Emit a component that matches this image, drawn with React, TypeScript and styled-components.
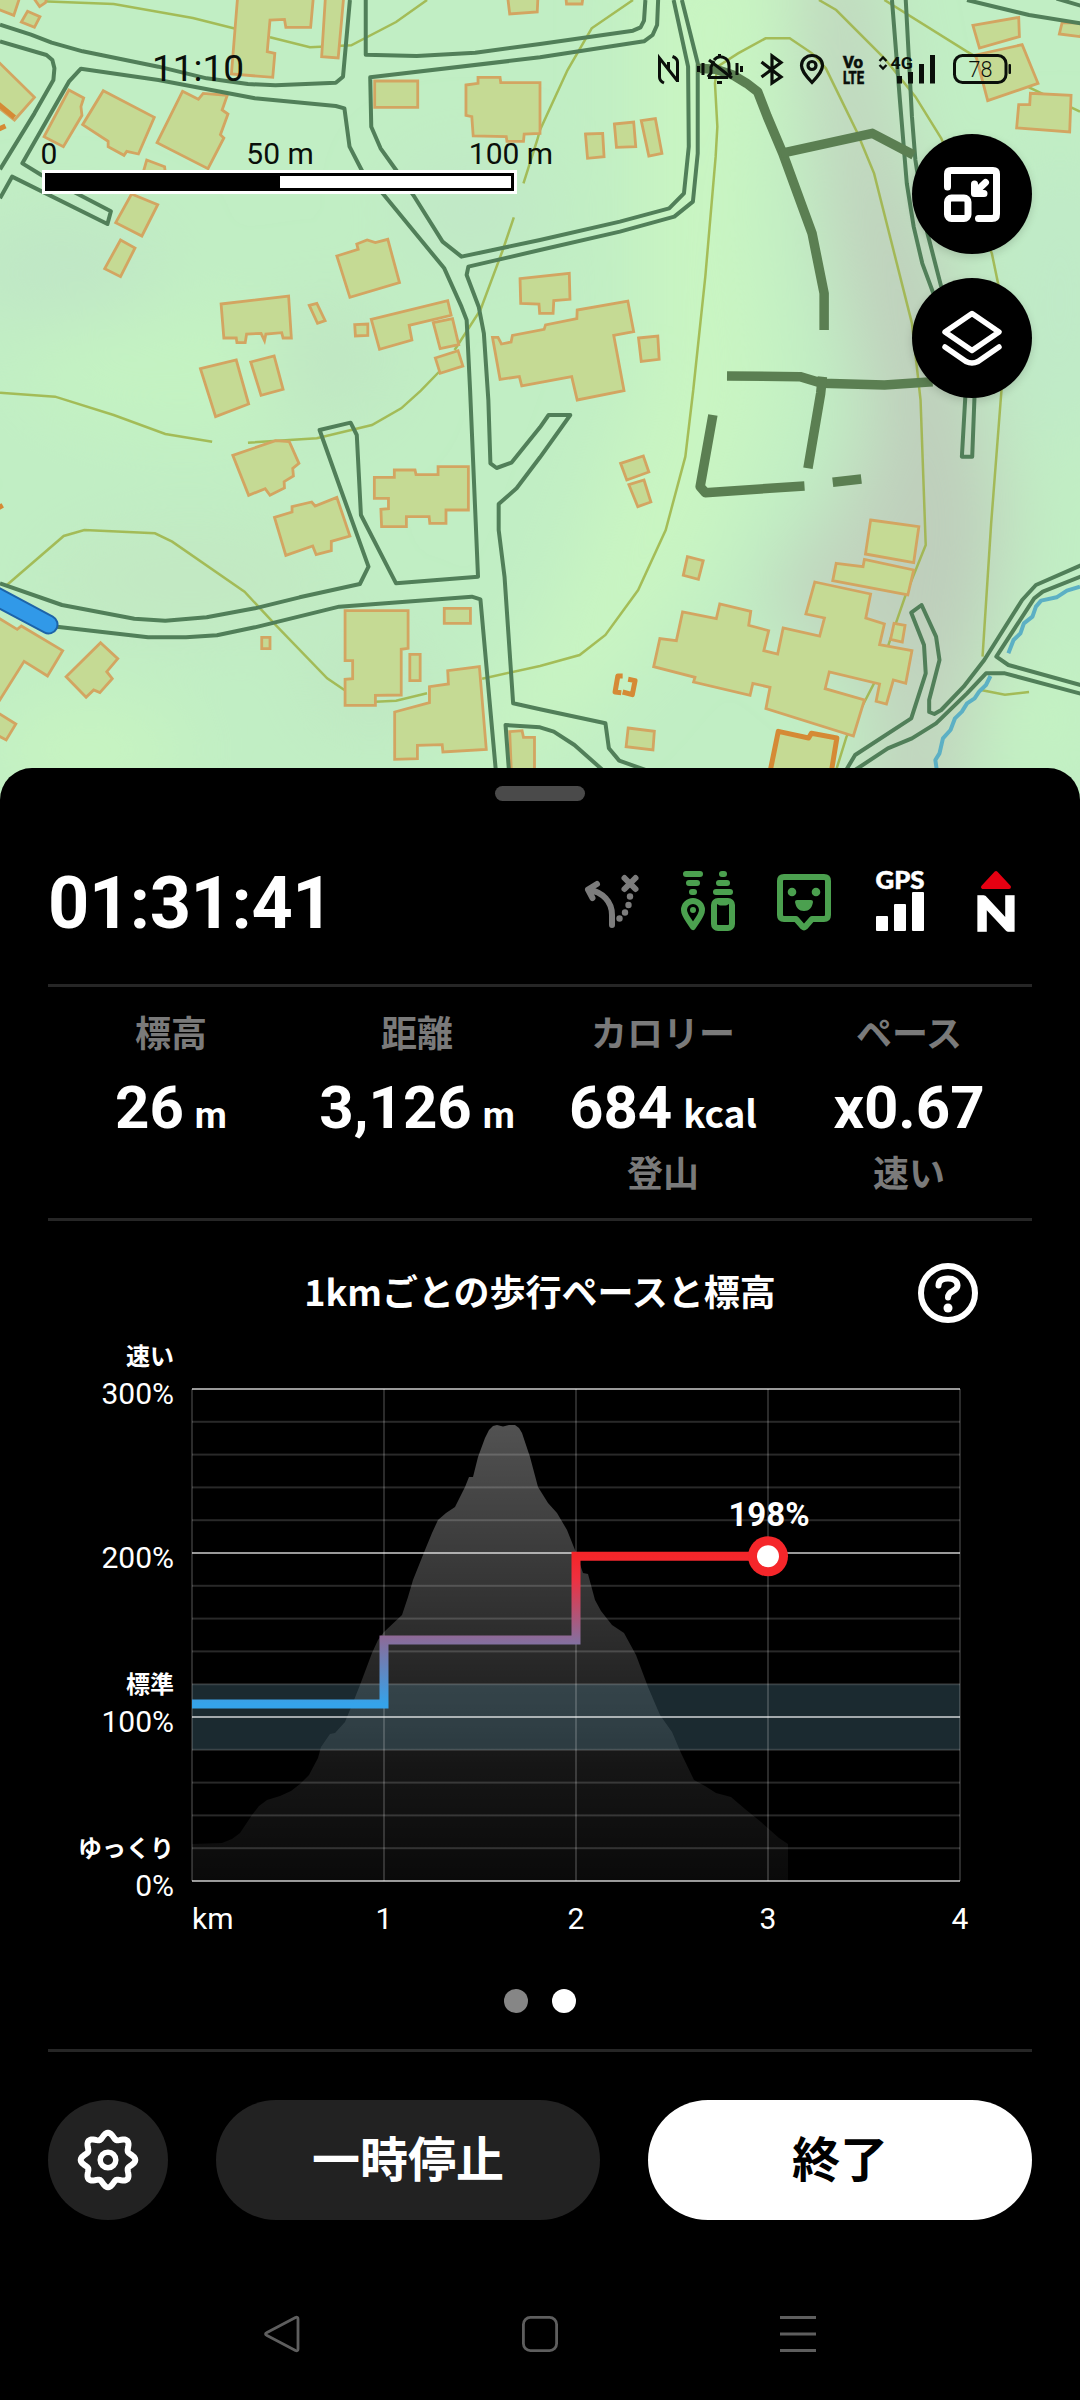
import React from 'react';
import styled, { createGlobalStyle } from 'styled-components';

const GlobalStyle = createGlobalStyle`
  body {
    margin: 0;
    background: #000;
    font-family: Roboto, 'Noto Sans CJK JP', sans-serif;
  }

  * {
    box-sizing: border-box;
  }
`;

const Screen = styled.div`
  display: flex;
  flex-direction: column;
  width: 1080px;
  height: 2400px;
  overflow: hidden;
  background: #000;
`;

/* ---------- map ---------- */

const MapArea = styled.div`
  position: relative;
  flex: none;
  height: 808px;
  background: #c1eec4;
`;

const MapSvg = styled.svg`
  display: block;
`;

const StatusBar = styled.div`
  position: absolute;
  top: 48px;
  left: 152px;
  right: 68px;
  display: flex;
  justify-content: space-between;
  align-items: center;
  height: 42px;
`;

const Clock = styled.span`
  color: #0a0f0a;
  font-size: 37px;
  line-height: 42px;
`;

const StatusIcons = styled.div`
  display: flex;
  height: 42px;
`;

const ScaleBar = styled.div`
  position: absolute;
  top: 136px;
  left: 42px;
  width: 475px;
`;

const ScaleLabels = styled.div`
  display: flex;
  justify-content: space-between;
  height: 34px;
  padding: 0 6px 0 7px;
  color: #0a0f0a;
  font-size: 30px;
  line-height: 36px;
`;

const ScaleLabel = styled.span`
  display: flex;
  justify-content: center;
  width: 0;
  white-space: nowrap;
`;

const ScaleTrack = styled.div`
  height: 24px;
  border: 3px solid #fff;
  background: #000;
  padding: 3px 3px 3px 235px;
`;

const ScaleHalf = styled.div`
  height: 12px;
  background: #fff;
`;

const MapButtons = styled.div`
  position: absolute;
  top: 134px;
  right: 48px;
  display: flex;
  flex-direction: column;
  gap: 24px;
`;

const MapButton = styled.button`
  display: flex;
  align-items: center;
  justify-content: center;
  width: 120px;
  height: 120px;
  padding: 0;
  border: none;
  border-radius: 50%;
  background: #000;
  box-shadow: 0 3px 9px rgba(0, 0, 0, 0.15);
`;

/* ---------- sheet ---------- */

const Sheet = styled.main`
  position: relative;
  display: flex;
  flex-direction: column;
  flex: 1;
  margin-top: -40px;
  padding: 18px 48px 0;
  border-radius: 32px 32px 0 0;
  background: #000;
  color: #fff;
`;

const Handle = styled.div`
  align-self: center;
  width: 90px;
  height: 15px;
  border-radius: 8px;
  background: #4a4a4a;
`;

const Divider = styled.hr`
  width: 100%;
  height: 3px;
  margin: 0;
  border: none;
  background: #262626;
`;

const SummaryRow = styled.div`
  display: flex;
  justify-content: space-between;
  align-items: center;
  height: 72px;
  margin: 64px 0 47px;
`;

const Elapsed = styled.div`
  padding-top: 6px;
  font-size: 72px;
  font-weight: 700;
  letter-spacing: -0.4px;
  line-height: 72px;
`;

const Indicators = styled.div`
  display: flex;
  gap: 24px;
`;

const Indicator = styled.svg`
  width: 72px;
  height: 72px;
  overflow: visible;
`;

const Stats = styled.div`
  display: grid;
  grid-template-columns: repeat(4, 1fr);
  height: 231px;
  padding-top: 18px;
`;

const Stat = styled.div`
  display: flex;
  flex-direction: column;
  align-items: center;
`;

const StatLabel = styled.div`
  color: #7a7a7a;
  font-family: 'Noto Sans CJK JP', sans-serif;
  font-size: 36px;
  font-weight: 700;
  line-height: 52px;
`;

const StatValue = styled.div`
  height: 88px;
  padding-top: 7px;
  font-size: 60px;
  font-weight: 700;
  line-height: 88px;
  white-space: pre;
  word-spacing: -4px;
`;

const Unit = styled.span<{ $cjk?: boolean }>`
  font-family: ${({ $cjk }) => ($cjk ? "'Noto Sans CJK JP'" : 'Roboto')}, sans-serif;
  font-size: 37px;
  line-height: 1;
`;

const ChartHeader = styled.div`
  display: grid;
  grid-template-columns: 60px 1fr 60px;
  align-items: center;
  height: 60px;
  margin: 42px 54px 0;
`;

const ChartTitle = styled.h2`
  grid-column: 2;
  margin: 0;
  padding-bottom: 7px;
  font-family: 'Noto Sans CJK JP', sans-serif;
  font-size: 36px;
  font-weight: 700;
  line-height: 52px;
  text-align: center;
`;

const ChartSvg = styled.svg`
  display: block;
  flex: none;
`;

const AxisText = styled.text<{ $bold?: boolean }>`
  fill: #fff;
  font-family: Roboto, sans-serif;
  font-size: ${({ $bold }) => ($bold ? 33 : 30)}px;
  font-weight: ${({ $bold }) => ($bold ? 700 : 400)};
`;

const AxisNote = styled.text`
  fill: #fff;
  font-family: 'Noto Sans CJK JP', sans-serif;
  font-size: 24px;
  font-weight: 700;
`;

const Pager = styled.div`
  display: flex;
  justify-content: center;
  gap: 24px;
  margin: 39px 0 36px;
`;

const PagerDot = styled.span<{ $active?: boolean }>`
  width: 24px;
  height: 24px;
  border-radius: 50%;
  background: ${({ $active }) => ($active ? '#fff' : '#868686')};
`;

const Actions = styled.div`
  display: grid;
  grid-template-columns: 120px 1fr 1fr;
  gap: 48px;
  height: 120px;
  margin-top: 48px;
`;

const RoundButton = styled.button`
  display: flex;
  align-items: center;
  justify-content: center;
  padding: 0;
  border: none;
  border-radius: 50%;
  background: #222;
`;

const ActionButton = styled.button<{ $primary?: boolean }>`
  display: flex;
  align-items: center;
  justify-content: center;
  padding: 0 0 9px;
  border: none;
  border-radius: 60px;
  background: ${({ $primary }) => ($primary ? '#fff' : '#222')};
  color: ${({ $primary }) => ($primary ? '#000' : '#fff')};
  font-family: 'Noto Sans CJK JP', sans-serif;
  font-size: 48px;
  font-weight: 700;
  line-height: 70px;
`;

const NavBar = styled.nav`
  display: flex;
  justify-content: space-between;
  margin: 93px 214px 0;
`;

/* ---------- map data: tiles of 1568 x 1200 units, second row starts at 1170 ---------- */

interface Tile {
  x: number;
  y: number;
  contours: string[];
  buildings: string[];
  roads: string[];
  walls?: string[];
  rivers?: string[];
  bold?: string[];
}

const TILES: Tile[] = [
  {
    x: 0,
    y: 0,
    contours: [
      '120,4 330,12 560,54 684,86',
      '784,112 900,142 1020,136 1150,66 1240,0',
      '1492,652 1460,750 1395,930 1320,1050',
      '1838,0 1718,85 1648,210 1568,390 1560,420 1520,550',
      '1280,1110 1222,1172 1165,1225 1080,1275 920,1315 720,1328',
      '0,1178 160,1190 330,1245 480,1302 616,1325',
    ],
    buildings: [
      '690,-10 910,-10 902,82 830,82 826,58 784,60 776,155 798,160 792,232 672,222',
      '945,-10 998,-10 982,174 934,170',
      '1474,-10 1562,-10 1560,36 1480,42',
      '1088,243 1213,243 1213,322 1088,322',
      '1353,255 1388,250 1388,232 1452,232 1454,248 1568,248 1568,400 1522,402 1520,424 1472,424 1470,410 1374,408 1370,350 1353,346',
      '-10,-10 58,-10 40,46 -10,26',
      '95,-10 137,-10 132,8 115,20',
      '80,34 116,50 100,82 62,66',
      '-10,180 100,292 42,360 -10,318',
      '200,270 243,294 235,320 238,346 184,440 128,410',
      '300,272 448,352 402,462 368,454 360,466 314,440 314,424 240,374',
      '530,274 576,298 590,280 660,286 645,330 662,342 640,404 650,414 604,506 456,428',
      '426,480 478,500 480,520 415,520',
      '382,582 458,614 412,708 336,668',
      '350,720 392,744 350,830 304,806',
      '978,768 1040,748 1036,732 1066,720 1090,728 1126,718 1160,848 1016,892',
      '642,912 838,888 846,1014 822,1014 818,998 772,1002 768,1022 758,1000 716,1002 712,1028 688,1028 686,1014 650,1014',
      '898,916 920,910 944,962 922,970',
      '1078,958 1300,902 1310,946 1188,976 1196,1020 1102,1048',
      '1030,974 1068,972 1068,1006 1032,1008',
      '1258,968 1314,956 1332,1034 1278,1046',
      '1264,1074 1330,1052 1344,1098 1278,1120',
      '582,1106 686,1080 722,1212 626,1250',
      '728,1086 796,1068 822,1168 758,1186',
      '1430,1012 1446,1012 1456,1032 1484,1026 1488,1006 1580,988 1584,975 1675,956 1676,930 1823,903 1840,995 1782,1006 1812,1172 1676,1200 1660,1130 1515,1158 1508,1130 1452,1138',
      '1510,836 1653,820 1655,898 1608,902 1606,940 1567,940 1565,912 1512,910',
    ],
    roads: [
      '0,74 90,104 150,128 240,154 460,200 600,235 720,252 800,256 975,248 996,230 1016,0',
      '0,124 135,165 152,180 158,205 155,240 100,340 0,508',
      '0,595 35,530 312,672 322,634 120,525 65,490 120,390 200,245 235,206 460,240 740,295 975,318 1000,325 1015,440 1050,510 1115,585 1290,805 1340,920 1355,960 1365,1170 1388,1730 1150,1750 1048,1545 1036,1305 1018,1268 928,1290 990,1470 1070,1700 1045,1752 870,1792 740,1825 600,1852 480,1862 390,1856 180,1815 0,1750',
      '1062,0 1062,164 1210,168 1380,158 1568,132 1838,92 1860,82 1870,62 1874,0',
      '1956,0 1998,200 2000,440 1986,580 1943,625 1800,665 1568,720 1340,770 1285,725 1200,585 1150,510 1105,445 1078,380 1075,232 1568,172 1870,124 1895,105 1908,75 1911,0',
      '1980,0 2026,190 2026,460 2012,605 1958,650 1800,695 1568,750 1360,800 1355,825 1390,920 1405,1000 1418,1200 1424,1390 1442,1404 1485,1388 1568,1282 1593,1245 1656,1245 1568,1372 1500,1465 1448,1512 1448,1590 1465,1730 1490,2110 1568,2128 1758,2170 1768,2245 1798,2282 1880,2312',
    ],
    bold: ['-10,308 42,352', '-10,390 16,378'],
  },
  {
    x: 1568,
    y: 0,
    contours: [
      '810,0 860,30 1000,175 1090,290 1165,415 1312,760 1340,900 1340,1170 1310,1570 1285,1970',
      '1000,0 1240,155 1420,262 1568,335',
      '445,1170 480,830 510,470 515,380 508,250 515,200 575,160 655,115 725,115 790,160 830,205 920,395 970,520 1080,970 1105,1200 1120,1635 1060,1790 1010,1940 970,2050 890,2210 860,2310',
    ],
    buildings: [
      '75,-10 125,-10 122,12 77,12',
      '132,402 182,400 186,470 138,475',
      '216,372 272,366 278,440 222,442',
      '294,362 335,356 354,460 316,468',
      '286,1014 342,1008 346,1078 294,1084',
      '1257,76 1390,52 1392,110 1276,144',
      '1516,68 1580,70 1570,110 1508,102',
      '1265,165 1400,134 1446,250 1300,302',
      '1390,314 1422,314 1424,280 1542,286 1538,396 1384,384',
    ],
    roads: [
      '1022,0 1045,300 1065,550 1085,680 1110,790 1160,930 1220,1050 1235,1190 1225,1370 1255,1370 1262,1180',
      '1062,0 1080,350 1090,480 1105,580 1125,700 1165,860',
      '1240,0 1420,45 1580,72',
      '1500,-4 1580,20',
    ],
    walls: [
      '455,205 510,208 560,225 600,250 632,275 660,350 705,460 790,700 825,880 825,990',
      '700,460 965,400 1085,465',
      '543,1128 755,1130 820,1150 1000,1155 1140,1145',
      '820,1130 815,1180 778,1405',
    ],
  },
  {
    x: 0,
    y: 1170,
    contours: ['1000,900 950,865 800,705 710,605 500,455 450,430 245,420 185,438 20,585', '1090,935 1150,932 1240,910'],
    buildings: [
      '676,196 800,152 840,155 868,220 850,235 852,258 825,275 826,294 784,316 770,296 722,316',
      '797,382 848,366 848,350 905,336 915,348 978,322 1016,438 962,454 962,482 918,494 908,468 830,496',
      '1087,262 1145,262 1145,240 1205,240 1208,254 1272,254 1272,230 1360,230 1360,360 1295,360 1295,400 1248,400 1246,380 1180,380 1180,410 1108,410 1106,358 1128,356 1128,325 1087,325',
      '1002,662 1185,662 1185,775 1165,778 1165,915 1090,916 1090,946 1002,946 1002,868 1024,866 1024,812 1002,812',
      '1190,793 1220,793 1220,872 1190,872',
      '1290,655 1366,655 1366,700 1290,700',
      '1146,966 1247,938 1247,890 1302,882 1300,842 1392,830 1412,1078 1286,1086 1284,1064 1212,1066 1212,1106 1146,1108',
      '760,742 784,742 784,776 760,776',
      '292,758 342,806 310,845 326,866 290,908 272,900 250,922 192,860',
      '-10,680 50,718 62,708 182,782 138,858 70,814 -10,945',
      '-10,966 46,1002 18,1050 -10,1034',
      '1480,1025 1516,1022 1520,1042 1552,1042 1552,1150 1485,1150',
    ],
    roads: [
      '165,710 430,742 540,742 630,736 740,712 985,650 1370,620 1395,628 1440,1145',
      '1478,1145 1468,1005 1568,1012 1608,1025 1668,1065 1750,1140',
    ],
    bold: ['-10,356 8,346'],
  },
  {
    x: 1568,
    y: 1170,
    contours: ['445,0 422,200 365,420 285,600 190,735 115,795 0,828 -168,866', '1280,900 1350,914 1420,906'],
    buildings: [
      '234,220 300,198 316,246 252,270',
      '258,284 302,270 322,336 284,350',
      '428,500 474,512 460,568 416,556',
      '960,390 1100,410 1085,518 945,492',
      '860,520 938,530 942,508 1085,540 1068,615 850,572',
      '798,576 960,612 946,684 1000,702 986,764 1080,782 1062,880 1026,870 1006,942 976,934 986,882 840,846 828,896 942,930 910,1038 656,956 668,892 618,880 610,916 446,876 450,862 330,830 348,746 396,752 414,666 512,686 522,642 612,664 606,706 664,722 650,782 690,792 706,714 812,738 826,684 772,672',
      '1028,700 1060,706 1052,756 1018,748',
      '256,1014 332,1024 328,1080 250,1070',
      '668,1145 692,1024 780,1044 788,1030 862,1044 846,1145',
    ],
    rivers: [
      '1568,590 1530,602 1500,622 1455,632 1440,650 1430,680 1405,700 1395,730 1375,750 1360,790',
      '1308,858 1295,885 1275,905 1262,925 1240,940 1225,965 1205,985 1192,1020 1170,1045 1160,1090 1148,1110 1152,1140',
    ],
    roads: [
      '1580,522 1440,585 1400,630 1290,810 1230,890 1165,960 1145,972 1130,966 1130,930 1160,810 1150,740 1108,645 1078,668 1115,765 1120,850 1078,985 915,1095 886,1145',
      '1580,556 1460,605 1435,625 1325,800 1360,825 1580,888',
      '1580,914 1350,850 1295,850 1240,910 1150,1000 1080,1045 1010,1075 915,1140',
    ],
    walls: ['502,75 465,290 480,308 768,288', '850,277 933,267'],
    bold: ['668,1145 692,1024 780,1044 788,1030 862,1044 846,1145', '240,858 226,858 218,906 236,908', '256,868 276,872 268,914 240,906'],
  },
];

const Contour = styled.polyline`
  fill: none;
  stroke: #9db344;
  stroke-width: 2.5;
  stroke-opacity: 0.85;
  vector-effect: non-scaling-stroke;
`;

const Building = styled.polygon`
  fill: #c5da94;
  stroke: #d3a561;
  stroke-width: 2.8;
  vector-effect: non-scaling-stroke;
`;

const Line = styled.polyline<{ $color: string; $width: number }>`
  fill: none;
  stroke: ${({ $color }) => $color};
  stroke-width: ${({ $width }) => $width};
  stroke-linejoin: round;
  vector-effect: non-scaling-stroke;
`;

const TopoMap: React.FC = () => (
  <MapSvg width="1080" height="808" viewBox="0 0 1080 808">
    <defs>
      <filter id="relief" x="-50%" y="-50%" width="200%" height="200%">
        <feGaussianBlur stdDeviation="36" />
      </filter>
    </defs>
    <g filter="url(#relief)">
      <path d="M640 -60L790 -60L760 200L780 400L720 560L600 700L440 808L560 600L640 380Z" fill="#c9f5c2" />
      <path d="M800 -60L860 -60L900 150L960 300L1010 520L950 860L850 860L880 700L760 600L840 500L870 420L830 240Z" fill="#c1d3be" />
      <path d="M890 180L920 180L950 420L970 640L910 640L910 400Z" fill="#bccbba" />
      <ellipse cx="180" cy="370" rx="160" ry="60" fill="#c4f3c2" />
      <ellipse cx="60" cy="270" rx="100" ry="50" fill="#c0e6c6" />
      <ellipse cx="190" cy="580" rx="150" ry="50" fill="#c2e8c3" />
      <ellipse cx="90" cy="750" rx="100" ry="50" fill="#c7f4c1" />
      <ellipse cx="330" cy="360" rx="60" ry="60" fill="#c0e6c3" />
      <ellipse cx="470" cy="210" rx="70" ry="50" fill="#c1e7c7" />
      <ellipse cx="1060" cy="300" rx="60" ry="150" fill="#c0eac8" />
      <ellipse cx="1040" cy="720" rx="60" ry="60" fill="#c4f2c3" />
      <ellipse cx="370" cy="680" rx="60" ry="50" fill="#c0e6c2" />
    </g>
    <g transform="scale(0.34439 0.33333)">
      {TILES.map((tile) => (
        <g key={`${tile.x}-${tile.y}`} transform={`translate(${tile.x} ${tile.y})`}>
          {tile.contours.map((p) => <Contour key={p} points={p} />)}
          {tile.rivers?.map((p) => <Line key={p} points={p} $color="#5cb0c4" $width={4} />)}
          {tile.buildings.map((p) => <Building key={p} points={p} />)}
          {tile.bold?.map((p) => <Line key={p} points={p} $color="#d58a35" $width={5} />)}
        </g>
      ))}
      {TILES.map((tile) => (
        <g key={`${tile.x}-${tile.y}`} transform={`translate(${tile.x} ${tile.y})`}>
          {tile.roads.map((p) => <Line key={p} points={p} $color="#517f59" $width={4} />)}
          {tile.walls?.map((p) => <Line key={p} points={p} $color="#5b7f52" $width={9.5} />)}
        </g>
      ))}
    </g>
    <g fill="none" strokeLinecap="round">
      <path d="M-20 588L48.500 624.500" stroke="#1d63a8" strokeWidth="20" />
      <path d="M-20 588L48.500 624.500" stroke="#3199e8" strokeWidth="16" />
    </g>
  </MapSvg>
);

/* viewBoxes below share the page's own pixel grid */
const StatusGlyphs: React.FC = () => (
  <StatusIcons>
    <svg width="36" height="42" viewBox="652 48 36 42" fill="none" stroke="#0a0f0a" strokeWidth="3">
      <path d="M664 83Q659.500 81 659.500 77V58L677.500 81" />
      <path d="M672.500 56.500Q677.500 58.500 677.500 62V82M668.500 62V69" />
    </svg>
    <svg width="64" height="42" viewBox="688 48 64 42" fill="none" stroke="#0a0f0a" strokeWidth="3">
      <path d="M698.500 66V72M703 63V75M737 63V75M741.500 66V72" />
      <path d="M708 77.500H728M708 77L711 73V67L714 61M714 60C719 54 729 57 729 66V71L731 75M719.500 54V57" />
      <path d="M709 60L732 78" />
      <path d="M717 82.500H722" />
    </svg>
    <svg width="40" height="42" viewBox="752 48 40 42" fill="none" stroke="#0a0f0a" strokeWidth="3.200">
      <path d="M761.500 62L781 77L772 83V56L781 62.500L761.500 77" />
    </svg>
    <svg width="46" height="42" viewBox="792 48 46 42" fill="none" stroke="#0a0f0a" strokeWidth="3.200">
      <path d="M812 82.500C804 74 801.500 70 801.500 65.500A10.500 10 0 0 1 822.500 65.500C822.500 70 820 74 812 82.500Z" />
      <circle cx="812" cy="65.500" r="4" />
    </svg>
    <svg width="36" height="42" viewBox="838 48 36 42" fill="#0a0f0a" stroke="#0a0f0a" strokeWidth="0.700" fontFamily="Roboto, sans-serif" fontWeight="700">
      <text x="843" y="68" fontSize="17" textLength="20" lengthAdjust="spacingAndGlyphs">Vo</text>
      <text x="843" y="84" fontSize="18.500" textLength="21" lengthAdjust="spacingAndGlyphs">LTE</text>
    </svg>
    <svg width="72" height="42" viewBox="874 48 72 42" fill="#0a0f0a">
      <path d="M879.500 61L883 57.500L886.500 61M879.500 65L883 68.500L886.500 65" fill="none" stroke="#0a0f0a" strokeWidth="2.400" />
      <text x="890.500" y="68.500" fontSize="17" fontFamily="Roboto, sans-serif" fontWeight="700" textLength="22.500" lengthAdjust="spacingAndGlyphs">4G</text>
      <rect x="897" y="76" width="5" height="7.500" />
      <rect x="908" y="72" width="5" height="11.500" />
      <rect x="919" y="64" width="5" height="19.500" />
      <rect x="930" y="55" width="5" height="28.500" />
    </svg>
    <svg width="66" height="42" viewBox="946 48 66 42">
      <rect x="954.500" y="55.500" width="51.500" height="27" rx="8" fill="none" stroke="#0a0f0a" strokeWidth="3" />
      <rect x="1008.500" y="64" width="2.500" height="10" rx="1" fill="#0a0f0a" />
      <text x="980.500" y="76.500" fontSize="21.500" fontFamily="Roboto, sans-serif" fontWeight="300" textAnchor="middle" fill="#0a0f0a">78</text>
    </svg>
  </StatusIcons>
);

/* ---------- chart ---------- */

const LEFT = 192;
const KM = 192;
const BASE = 1881;
const HUNDRED = 164;

const PROFILE =
  '192,1881 192,1844 222,1843 232,1839 240,1833 252,1815 259,1806 267,1800 280,1796 291,1791 300,1784 309,1775 318,1758 321,1747 330,1734 335,1733 345,1722 354,1700 360,1685 372,1653 378,1640 384,1632 402,1615 408,1597 413,1580 425,1550 432,1533 438,1520 446,1513 455,1507 465,1487 469,1477 473,1477 478,1457 485,1438 489,1430 493,1426 497,1425 503,1426.500 509,1425 515,1425 519,1428 522,1433 530,1457 538,1487 548,1503 557,1513 567,1530 575,1550 583,1573 588,1574 595,1600 601,1611 612,1625 624,1633 636,1655 648,1687 660,1715 672,1732 681,1753 694,1780 705,1786 716,1793 731,1797 745,1809 761,1822 779,1838 788,1844 788,1881';

const PERCENTS = [300, 200, 100, 0];
const NOTES: Record<number, string> = { 300: '速い', 100: '標準', 0: 'ゆっくり' };

const yOf = (percent: number) => BASE - (percent / 100) * HUNDRED;

const PaceChart: React.FC = () => (
  <ChartSvg width="984" height="627" viewBox="48 1323 984 627">
    <defs>
      <linearGradient id="mountain" x1="0" y1="1425" x2="0" y2="1881" gradientUnits="userSpaceOnUse">
        <stop offset="0" stopColor="#fff" stopOpacity="0.32" />
        <stop offset="0.75" stopColor="#fff" stopOpacity="0.085" />
        <stop offset="1" stopColor="#fff" stopOpacity="0.04" />
      </linearGradient>
      <linearGradient id="pace" x1="0" y1={yOf(108)} x2="0" y2={yOf(198)} gradientUnits="userSpaceOnUse">
        <stop offset="0" stopColor="#35a3ea" />
        <stop offset="0.44" stopColor="#8a6c9a" />
        <stop offset="0.85" stopColor="#ef3040" />
        <stop offset="1" stopColor="#f5262a" />
      </linearGradient>
    </defs>
    <polygon points={PROFILE} fill="url(#mountain)" />
    <rect x={LEFT} y={yOf(120)} width={KM * 4} height={yOf(80) - yOf(120)} fill="#649bb2" fillOpacity="0.27" />
    {Array.from({ length: 16 }, (_, i) => i * 20).map((p) => (
      <rect key={p} x={LEFT} y={yOf(p) - 1} width={KM * 4} height="2" fill="#fff" fillOpacity={p % 100 ? 0.16 : 0.6} />
    ))}
    {[0, 1, 2, 3, 4].map((k) => (
      <rect key={k} x={LEFT + KM * k - 1} y={yOf(300)} width="2" height={HUNDRED * 3} fill="#fff" fillOpacity="0.17" />
    ))}
    <path
      d={`M${LEFT} ${yOf(108)}H384V${yOf(147)}H576V${yOf(198)}H768`}
      fill="none"
      stroke="url(#pace)"
      strokeWidth="9"
    />
    <circle cx="768" cy={yOf(198)} r="20" fill="#f5262a" />
    <circle cx="768" cy={yOf(198)} r="11" fill="#fff" />
    <AxisText $bold x="769" y="1525.500" textAnchor="middle">198%</AxisText>
    {PERCENTS.map((p) => (
      <g key={p} textAnchor="end">
        {NOTES[p] && <AxisNote x="174" y={yOf(p) - 24}>{NOTES[p]}</AxisNote>}
        <AxisText x="174" y={yOf(p) + 15}>{p}%</AxisText>
      </g>
    ))}
    <AxisText x="192" y="1929">km</AxisText>
    {[1, 2, 3, 4].map((k) => (
      <AxisText key={k} x={LEFT + KM * k} y="1929" textAnchor="middle">{k}</AxisText>
    ))}
  </ChartSvg>
);

const gearPath = () => {
  const points: string[] = [];
  for (let a = 0; a < 360; a += 3) {
    const t = (a * Math.PI) / 180;
    const r = 24.4 + 2.9 * Math.cos(8 * t);
    points.push(`${(32 + r * Math.sin(t)).toFixed(2)},${(32 - r * Math.cos(t)).toFixed(2)}`);
  }
  return points.join(' ');
};

const App: React.FC = () => (
  <Screen>
    <GlobalStyle />
    <MapArea>
      <TopoMap />
      <StatusBar>
        <Clock>11:10</Clock>
        <StatusGlyphs />
      </StatusBar>
      <ScaleBar>
        <ScaleLabels>
          <ScaleLabel>0</ScaleLabel>
          <ScaleLabel>50 m</ScaleLabel>
          <ScaleLabel>100 m</ScaleLabel>
        </ScaleLabels>
        <ScaleTrack>
          <ScaleHalf />
        </ScaleTrack>
      </ScaleBar>
      <MapButtons>
        <MapButton>
          <svg width="60" height="60" viewBox="0 0 60 60" fill="none" stroke="#fff" strokeWidth="7" strokeLinecap="round" strokeLinejoin="round">
            <path d="M5.500 23V10Q5.500 6.500 9 6.500H51Q54.500 6.500 54.500 10V50Q54.500 54.500 50 54.500H36.500" />
            <rect x="5.500" y="34" width="20.500" height="20.500" rx="4" />
            <path d="M43.500 18.500L34 27.500M32.500 20V29.500H42" />
          </svg>
        </MapButton>
        <MapButton>
          <svg width="60" height="60" viewBox="0 0 60 60" fill="none" stroke="#fff" strokeWidth="5.500" strokeLinecap="round" strokeLinejoin="round">
            <path d="M30 5.500L57 24L30 42.500L3 24Z" />
            <path d="M3 39L24 53.500Q30 56.500 36 53.500L57 39" />
          </svg>
        </MapButton>
      </MapButtons>
    </MapArea>

    <Sheet>
      <Handle />
      <SummaryRow>
        <Elapsed>01:31:41</Elapsed>
        <Indicators>
          <Indicator viewBox="0 0 72 72" fill="none" stroke="#7c7c7c" strokeWidth="6" strokeLinecap="round" strokeLinejoin="round">
            <path d="M36 60V50C36 37 27 27 12 24.500M21 19L12 24.500L16.500 33" />
            <path d="M48.500 13L59.500 24M59.500 13L48.500 24" />
            <g fill="#7c7c7c" stroke="none">
              <circle cx="54" cy="31.500" r="3.200" />
              <circle cx="52.500" cy="40" r="3.200" />
              <circle cx="49" cy="47.500" r="3.200" />
              <circle cx="43.500" cy="53.500" r="3.200" />
            </g>
          </Indicator>
          <Indicator viewBox="0 0 72 72" fill="none" stroke="#4ba04f" strokeWidth="6" strokeLinecap="round" strokeLinejoin="round">
            <path d="M14 9H28M17 18H25M20 27H22M50 9H52M47 18H55M44 27H58" />
            <path d="M21 62C16 54 12 50 12 45A9 9 0 0 1 30 45C30 50 26 54 21 62Z" />
            <circle cx="21" cy="45" r="3" fill="#4ba04f" stroke="none" />
            <rect x="42" y="36" width="18" height="27" rx="4" />
            <path d="M48.500 37.500H53.500" />
          </Indicator>
          <Indicator viewBox="0 0 72 72" fill="none" stroke="#4ba04f" strokeWidth="6" strokeLinejoin="round">
            <path d="M16 12H56Q60 12 60 16V50Q60 54 56 54H44L37 62Q36 63 35 62L28 54H16Q12 54 12 50V16Q12 12 16 12Z" />
            <g fill="#4ba04f" stroke="none">
              <circle cx="24" cy="27" r="4.300" />
              <circle cx="48" cy="27" r="4.300" />
              <path d="M29 35H43Q45 35 45 37C44 43 41 46 36 46S28 43 27 37Q27 35 29 35Z" />
            </g>
          </Indicator>
          <Indicator viewBox="0 0 72 72" fill="#fff">
            <text x="11.500" y="23.500" fontFamily="Lato, sans-serif" fontWeight="900" fontSize="24" stroke="#fff" strokeWidth="0.500" textLength="49" lengthAdjust="spacingAndGlyphs">GPS</text>
            <rect x="12" y="51" width="12" height="15" rx="1" />
            <rect x="30" y="39" width="12" height="27" rx="1" />
            <rect x="48" y="27" width="12" height="39" rx="1" />
          </Indicator>
          <Indicator viewBox="0 0 72 72">
            <path d="M36 8L23 22H49Z" fill="#e60012" stroke="#e60012" strokeWidth="4" strokeLinejoin="round" />
            <text x="14" y="65.500" fontFamily="Lato, sans-serif" fontWeight="900" fontSize="48" stroke="#fff" strokeWidth="1.500" textLength="44" lengthAdjust="spacingAndGlyphs" fill="#fff">N</text>
          </Indicator>
        </Indicators>
      </SummaryRow>
      <Divider />
      <Stats>
        <Stat>
          <StatLabel>標高</StatLabel>
          <StatValue>26 <Unit>m</Unit></StatValue>
        </Stat>
        <Stat>
          <StatLabel>距離</StatLabel>
          <StatValue>3,126 <Unit>m</Unit></StatValue>
        </Stat>
        <Stat>
          <StatLabel>カロリー</StatLabel>
          <StatValue>684 <Unit $cjk>kcal</Unit></StatValue>
          <StatLabel>登山</StatLabel>
        </Stat>
        <Stat>
          <StatLabel>ペース</StatLabel>
          <StatValue>x0.67</StatValue>
          <StatLabel>速い</StatLabel>
        </Stat>
      </Stats>
      <Divider />
      <ChartHeader>
        <ChartTitle>1kmごとの歩行ペースと標高</ChartTitle>
        <svg width="60" height="60" viewBox="0 0 60 60" fill="none" stroke="#fff" strokeWidth="6" strokeLinecap="round" strokeLinejoin="round">
          <circle cx="30" cy="30" r="27" />
          <path d="M20.500 22.500C20.500 17.500 24 15.500 30 15.500C36 15.500 39.500 18 39.500 22.500C39.500 29 30 27 30 34.500" />
          <circle cx="30" cy="45" r="4.500" fill="#fff" stroke="none" />
        </svg>
      </ChartHeader>
      <PaceChart />
      <Pager>
        <PagerDot />
        <PagerDot $active />
      </Pager>
      <Divider />
      <Actions>
        <RoundButton>
          <svg width="64" height="64" viewBox="0 0 64 64" fill="none" stroke="#fff" strokeWidth="6" strokeLinejoin="round">
            <polygon points={gearPath()} />
            <circle cx="32" cy="32" r="7.800" strokeWidth="5.500" />
          </svg>
        </RoundButton>
        <ActionButton>一時停止</ActionButton>
        <ActionButton $primary>終了</ActionButton>
      </Actions>
      <NavBar>
        <svg width="40" height="42" viewBox="0 0 40 42" fill="none" stroke="#5e5e5e" strokeWidth="2.800" strokeLinejoin="round">
          <path d="M5 19.500L33.500 4.500Q36 3.500 36 6V36Q36 38.500 33.500 37.500L5 22.500Q2 21 5 19.500Z" />
        </svg>
        <svg width="40" height="42" viewBox="0 0 40 42" fill="none" stroke="#5e5e5e" strokeWidth="2.800">
          <rect x="3.400" y="4.400" width="33.200" height="33.200" rx="7" />
        </svg>
        <svg width="40" height="42" viewBox="0 0 40 42" stroke="#5e5e5e" strokeWidth="3">
          <path d="M2 4.500H38M2 21H38M2 37.500H38" />
        </svg>
      </NavBar>
    </Sheet>
  </Screen>
);

export default App;
